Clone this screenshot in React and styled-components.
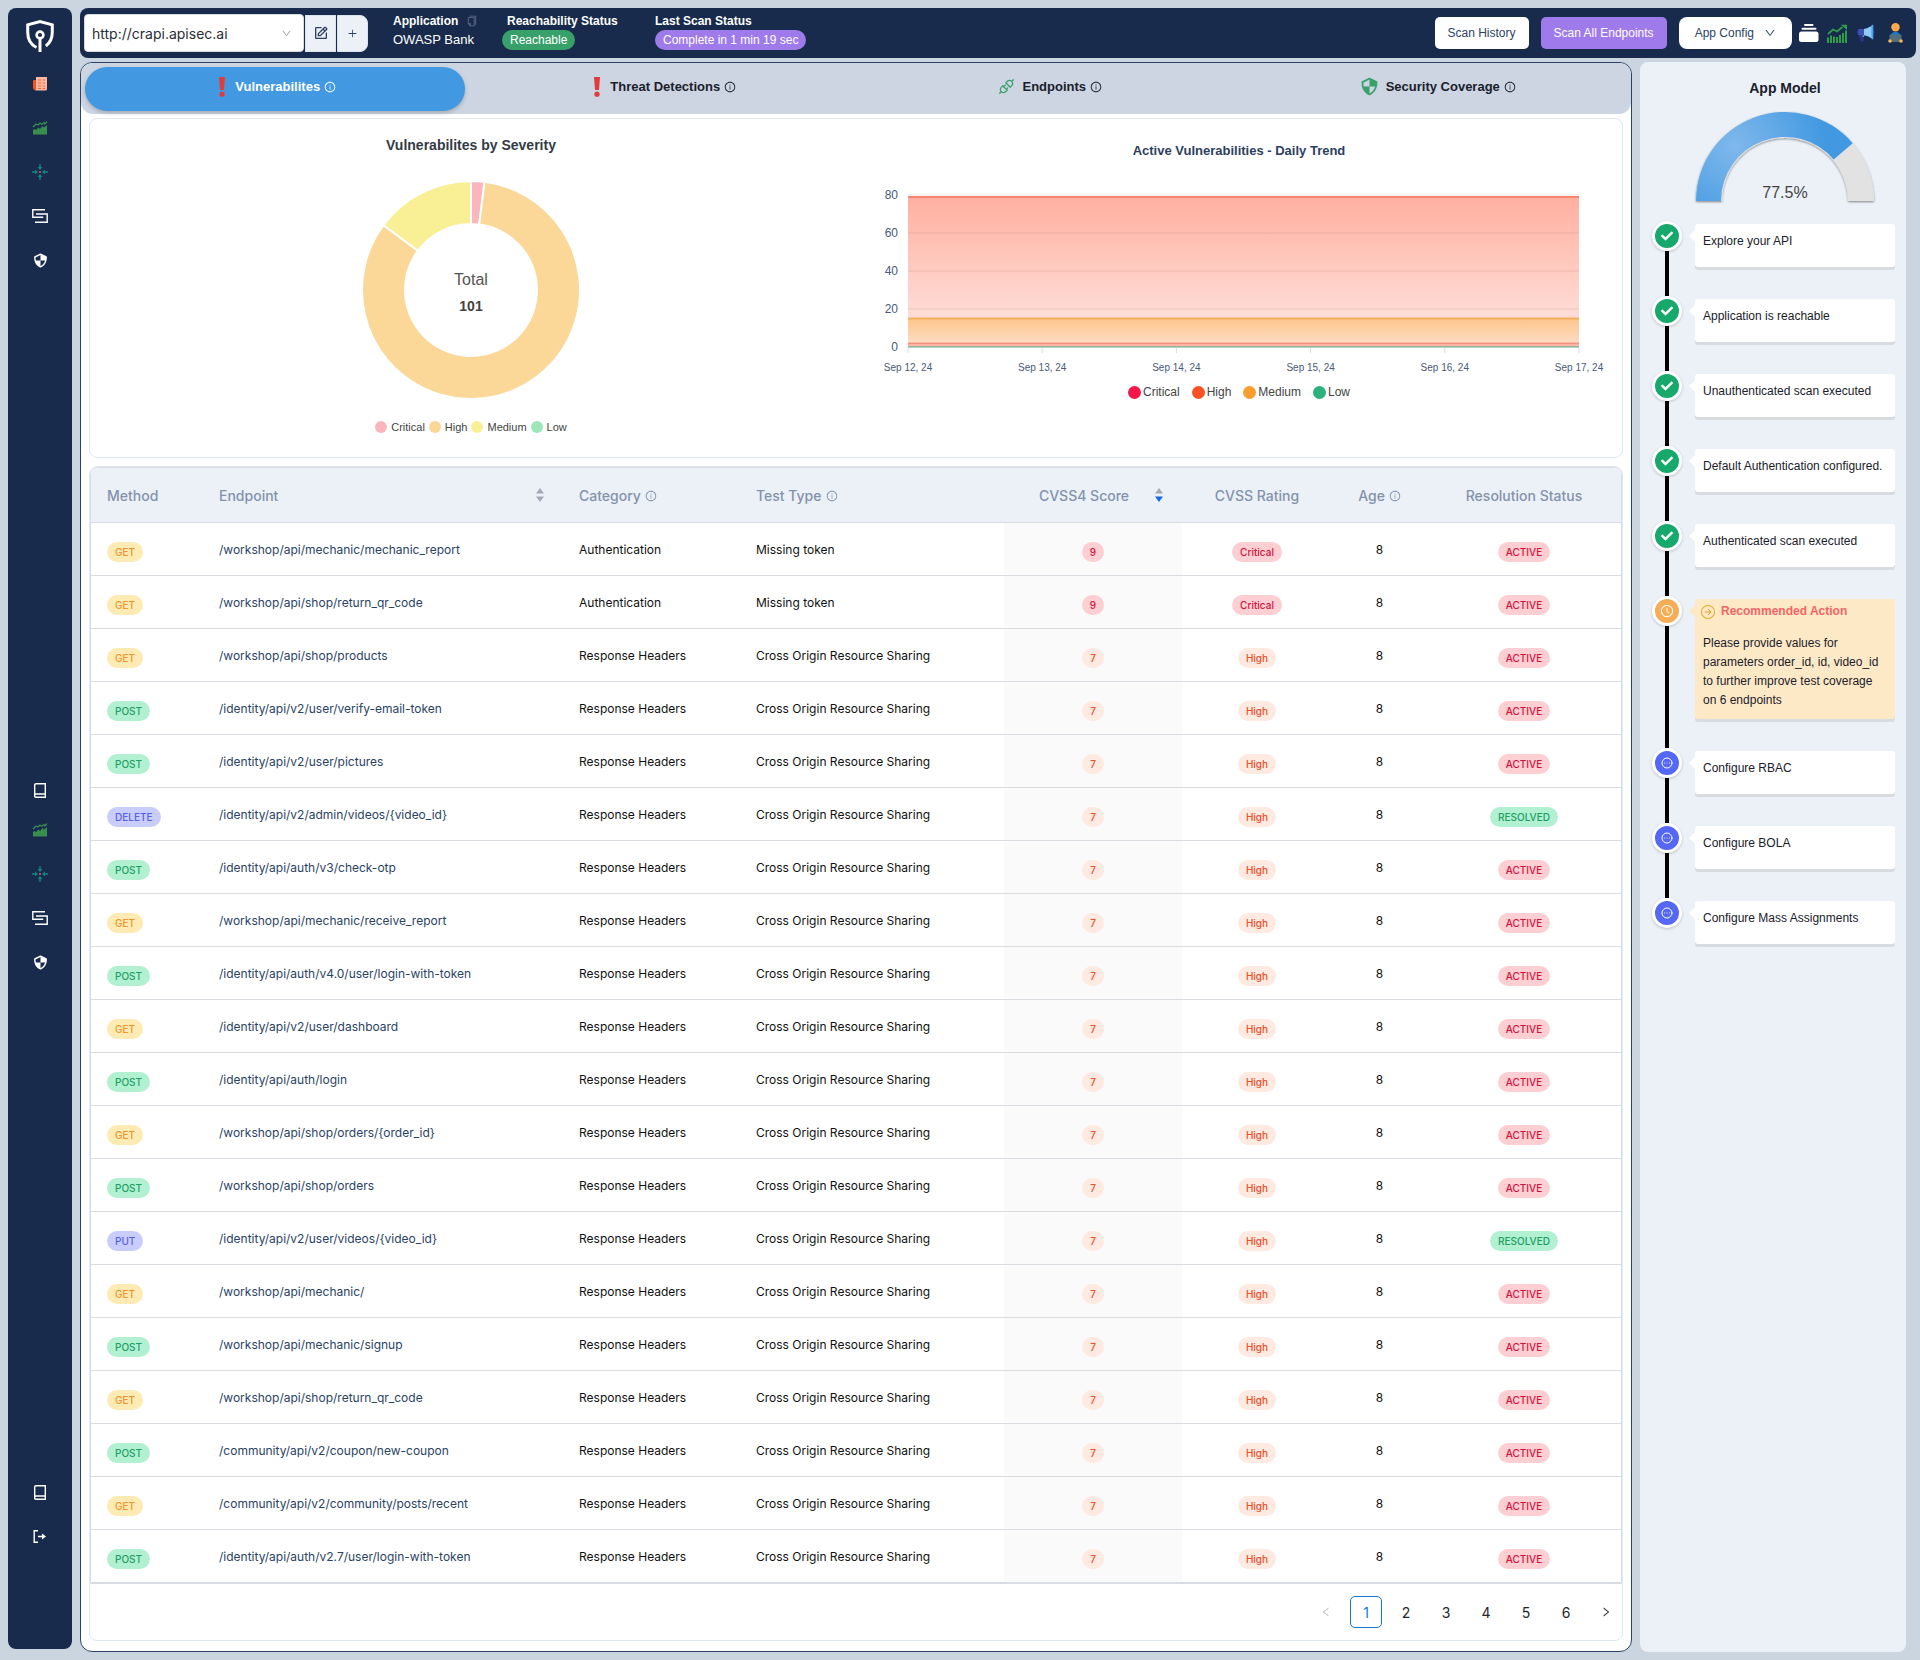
import { useState } from "react"
import styled, { createGlobalStyle } from "styled-components"
import {
  AiOutlineApi,
  AiOutlineClockCircle,
  AiOutlineCopy,
  AiOutlineDown,
  AiOutlineInfoCircle,
  AiOutlineLeft,
  AiOutlinePlus,
  AiOutlineRight,
} from "react-icons/ai"
import { BiEdit, BiShieldQuarter } from "react-icons/bi"
import { BsArrowRightCircle } from "react-icons/bs"
import { FaCheck } from "react-icons/fa"
import { FcAdvertising } from "react-icons/fc"
import { CircleEllipsis } from "lucide-react"

const GlobalStyle = createGlobalStyle`
  :root {
    --color-navy: #182b4d;
    --color-page: #cbd5e0;
    --color-panel: #ebf1f7;
    --color-border: #e2e8f0;
    --color-line: #d9dde1;
    --color-blue: #4299e1;
    --color-green: #38a169;
    --color-purple: #9f7aea;
    --font-ui: "Liberation Sans", Arial, sans-serif;
    --font-table: Inter, "Liberation Sans", sans-serif;
  }

  * {
    box-sizing: border-box;
  }

  body {
    margin: 0;
    background: var(--color-page);
    font-family: var(--font-ui);
    font-size: 12px;
    color: #1a202c;
  }

  button, select {
    font-family: inherit;
    cursor: pointer;
  }

  h2, p, dl, dd, ol, ul {
    margin: 0;
    padding: 0;
  }

  svg {
    display: block;
    flex-shrink: 0;
  }
`

const Page = styled.div`
  display: flex;
  gap: 8px;
  min-height: 100vh;
  padding: 8px 4px 8px 8px;
`

const Sidebar = styled.nav`
  display: flex;
  flex-direction: column;
  justify-content: space-between;
  flex: 0 0 64px;
  margin-bottom: 3px;
  padding: 10px 0 91px;
  border-radius: 8px;
  background: var(--color-navy);
`

const NavGroup = styled.div`
  display: flex;
  flex-direction: column;
  align-items: center;
  padding-top: ${({ $offset }) => $offset || 0}px;
`

const LogoLink = styled.a`
  display: flex;
  align-items: flex-start;
  height: 44px;
`

const NavLink = styled.a`
  display: flex;
  align-items: center;
  justify-content: center;
  width: 64px;
  height: ${({ $short }) => ($short ? 36 : 44)}px;
  color: white;
`

const Content = styled.div`
  display: flex;
  flex-direction: column;
  flex: 1;
  gap: 4px;
  min-width: 0;
`

const Header = styled.header`
  display: flex;
  align-items: center;
  height: 50px;
  padding: 0 11px 0 4px;
  border-radius: 8px;
  background: var(--color-navy);
  color: white;
`

const UrlGroup = styled.div`
  display: flex;
  align-items: center;
  gap: 1px;
`

const SelectBox = styled.label`
  display: flex;
  align-items: center;
  position: relative;

  svg {
    position: absolute;
    right: 12px;
    color: #a0a6b0;
    pointer-events: none;
  }
`

const UrlSelect = styled.select`
  appearance: none;
  width: 220px;
  height: 38px;
  padding: 0 30px 0 7px;
  border: 1px solid #d9d9d9;
  border-radius: 4px;
  background: white;
  color: #2a2e35;
  font-family: var(--font-table);
  font-size: 14px;
`

const SquareButton = styled.button`
  display: flex;
  align-items: center;
  justify-content: center;
  width: 31px;
  height: 37px;
  padding: 0;
  border: 1px solid #dbe3ee;
  border-radius: ${({ $last }) => ($last ? "0 8px 8px 0" : "0")};
  background: var(--color-panel);
  color: #2d3f62;
`

const StatusList = styled.dl`
  display: flex;
  align-self: flex-start;
  gap: 20px;
  flex: 1;
  padding-top: 5px;
  margin-left: 25px;
`

const Status = styled.div`
  display: flex;
  flex-direction: column;
  align-items: flex-start;
  gap: 1px;
  width: ${({ $width }) => $width}px;
`

const StatusLabel = styled.dt`
  display: flex;
  align-items: center;
  gap: 8px;
  line-height: 16px;
  font-weight: bold;
  white-space: nowrap;
  padding-left: ${({ $inset }) => ($inset ? 5 : 0)}px;

  svg {
    color: #5f6f8c;
  }
`

const StatusValue = styled.dd`
  line-height: 20px;
  font-size: 13px;
`

const StatusPill = styled.dd`
  padding: 0 8px;
  border-radius: 10px;
  background: ${({ $color }) => $color};
  line-height: 20px;
  white-space: nowrap;
`

const HeaderActions = styled.div`
  display: flex;
  align-items: center;
  gap: 12px;
`

const HeaderButton = styled.button`
  display: flex;
  align-items: center;
  gap: 10px;
  height: 32px;
  padding: 0 ${({ $wide }) => ($wide ? 16 : 13)}px;
  border: none;
  border-radius: ${({ $wide }) => ($wide ? 8 : 5)}px;
  background: ${({ $primary }) => ($primary ? "var(--color-purple)" : "white")};
  color: ${({ $primary }) => ($primary ? "white" : "#2a4365")};
  font-size: 12px;
  white-space: nowrap;
`

const HeaderIcons = styled.div`
  display: flex;
  align-items: center;
  gap: 8px;
  margin-left: -5px;
`

const IconButton = styled.button`
  display: flex;
  padding: 0;
  border: none;
  background: none;
  color: white;
`

const Body = styled.div`
  display: flex;
  flex: 1;
  gap: 8px;
  margin-right: 10px;
`

const Main = styled.main`
  flex: 1;
  min-width: 0;
  border: 1px solid #2a4365;
  border-radius: 12px;
  background: white;
`

const TabBar = styled.div`
  display: grid;
  grid-template-columns: repeat(4, 1fr);
  height: 51px;
  padding: 4px 0 3px;
  border-radius: 12px;
  background: #ccd5e1;
`

const Tab = styled.button`
  display: flex;
  align-items: center;
  justify-content: center;
  gap: 4px;
  margin: 0 4px;
  padding: 0 0 5px;
  border: none;
  border-radius: 22px;
  background: ${({ $active }) => ($active ? "var(--color-blue)" : "transparent")};
  box-shadow: ${({ $active }) => ($active ? "0 2px 4px rgba(0, 0, 0, 0.2)" : "none")};
  color: ${({ $active }) => ($active ? "white" : "#1a202c")};
  font-size: 13px;
  font-weight: bold;
`

const TabLabel = styled.span`
  padding-left: 2px;
`

const Panels = styled.div`
  display: flex;
  flex-direction: column;
  gap: 8px;
  padding: 4px 8px 10px;
`

const Card = styled.section`
  border: 1px solid var(--color-border);
  border-radius: 8px;
`

const ChartsCard = styled(Card)`
  display: grid;
  grid-template-columns: 1fr 1fr;
  height: 340px;
`

const ChartColumn = styled.div`
  display: flex;
  flex-direction: column;
  align-items: center;
  padding-top: ${({ $top }) => $top}px;
  padding-right: ${({ $right }) => $right || 0}px;
`

const ChartTitle = styled.h2`
  font-size: ${({ $small }) => ($small ? 13 : 14)}px;
  line-height: 20px;
  color: ${({ $small }) => ($small ? "#2d3f62" : "#333a44")};
`

const Donut = styled.svg`
  width: 220px;
  height: 220px;
  margin: 25px 0 19px;
`

const TrendSvg = styled.svg`
  width: 100%;
  margin-top: 22px;
`

const Legend = styled.ul`
  display: flex;
  gap: ${({ $large }) => ($large ? 12 : 4)}px;
  list-style: none;
  font-size: ${({ $large }) => ($large ? 12 : 11)}px;
  line-height: 16px;
  color: #444;
`

const LegendItem = styled.li`
  display: flex;
  align-items: center;
  gap: ${({ $large }) => ($large ? 2 : 4)}px;

  &::before {
    content: "";
    width: ${({ $large }) => ($large ? 13 : 12)}px;
    height: ${({ $large }) => ($large ? 13 : 12)}px;
    border-radius: 50%;
    background: ${({ $color }) => $color};
  }
`

const TableFrame = styled.div`
  border: 1px solid var(--color-line);
  border-radius: 8px 8px 0 0;
  overflow: hidden;
`

const Table = styled.table`
  width: 100%;
  table-layout: fixed;
  border-collapse: separate;
  border-spacing: 0;
  font-family: var(--font-table);
  font-size: 12px;
`

const HeadCell = styled.th`
  height: 55px;
  padding: 0 16px;
  border-bottom: 1px solid var(--color-line);
  background: #ebf1f6;
  color: #8492ad;
  font-size: 14px;
  font-weight: 500;
  white-space: nowrap;
`

const HeadContent = styled.div`
  display: flex;
  align-items: center;
  justify-content: ${({ $center }) => ($center ? "center" : "flex-start")};
  gap: 4px;
`

const HeadLabel = styled.span`
  flex: ${({ $grow }) => ($grow ? 1 : "none")};
  text-align: ${({ $center }) => ($center ? "center" : "left")};
`

const InfoIcon = styled(AiOutlineInfoCircle)`
  margin-top: 2px;
`

const SortButton = styled.button`
  padding: 0 3px;
  border: none;
  background: none;
`

const Cell = styled.td`
  height: 53px;
  padding: ${({ $tag }) => ($tag ? "5px 16px 0" : "0 16px")};
  border-bottom: 1px solid var(--color-line);
  background: ${({ $sorted }) => ($sorted ? "#fafafa" : "white")};
  color: #101010;
  text-align: ${({ $center }) => ($center ? "center" : "left")};
`

const EndpointLink = styled.a`
  color: #2a4365;
  text-decoration: none;
`

const tones = {
  GET: ["#feebb4", "#f0932b"],
  POST: ["#b2f0d2", "#1d9e63"],
  PUT: ["#c9cdfd", "#5561ea"],
  DELETE: ["#c9cdfd", "#5561ea"],
  Critical: ["#fdcfd2", "#d3113f"],
  High: ["#feeae1", "#e8502b"],
  ACTIVE: ["#fdcfd2", "#d3113f"],
  RESOLVED: ["#b2f0d2", "#1d9e63"],
}

const Tag = styled.span`
  display: inline-block;
  padding: 0 8px;
  border-radius: 10px;
  background: ${({ $tone }) => tones[$tone][0]};
  color: ${({ $tone }) => tones[$tone][1]};
  font-size: 10px;
  font-weight: 500;
  line-height: 20px;
  vertical-align: middle;
`

const Pagination = styled.nav`
  display: flex;
  justify-content: flex-end;
  gap: 8px;
  padding: 12px 0;
`

const PageButton = styled.button`
  display: flex;
  align-items: center;
  justify-content: center;
  width: 32px;
  height: 32px;
  padding: 0;
  border: 1px solid ${({ $active }) => ($active ? "#1677cf" : "transparent")};
  border-radius: 5px;
  background: white;
  color: ${({ $active }) => ($active ? "#1677e6" : "#22262c")};
  font-family: var(--font-table);
  font-size: 14px;

  &:disabled {
    color: #bfbfbf;
    cursor: default;
  }
`

const Aside = styled.aside`
  flex: 0 0 266px;
  padding: 16px 11px 16px 12px;
  border-radius: 8px;
  background: var(--color-panel);
`

const Gauge = styled.div`
  display: flex;
  flex-direction: column;
  align-items: center;
  gap: 12px;
  margin: 0 -11px 0 12px;
`

const AsideTitle = styled.h2`
  font-size: 14px;
  line-height: 20px;
`

const Timeline = styled.ol`
  margin-top: 15px;
  list-style: none;
`

const Step = styled.li`
  display: flex;
  gap: 13px;
`

const Rail = styled.div`
  display: flex;
  flex-direction: column;
  align-items: center;
  flex: 0 0 30px;
`

const StepDot = styled.span`
  display: flex;
  align-items: center;
  justify-content: center;
  width: 30px;
  height: 30px;
  border: 3px solid white;
  border-radius: 50%;
  background: ${({ $color }) => $color};
  box-shadow: 0 1px 3px rgba(0, 0, 0, 0.2);
  color: white;
`

const RailLine = styled.span`
  flex: 1;
  width: 4px;
  background: black;
`

const StepCard = styled.div`
  position: relative;
  flex: 1;
  min-height: 43px;
  margin: 3px 0 29px;
  padding: 8px 8px ${({ $highlight }) => ($highlight ? 9 : 7)}px;
  border-radius: 3px;
  background: ${({ $highlight }) => ($highlight ? "#fee9c6" : "white")};
  box-shadow: 0 3px 0 #d8dce1;
  line-height: 19px;

  &::before {
    content: "";
    position: absolute;
    top: 6px;
    left: -6px;
    border: 6px solid transparent;
    border-left-width: 0;
    border-right-color: ${({ $highlight }) => ($highlight ? "#fee9c6" : "white")};
  }
`

const StepTitle = styled.p`
  display: flex;
  align-items: center;
  gap: 6px;
  margin: -5px 0 13px -2px;
  color: #f56565;
  font-weight: bold;

  svg {
    color: #e0a526;
  }
`

const LogoIcon = () => (
  <svg width="28" height="34" viewBox="0 0 28 34" fill="none" stroke="white">
    <path d="M10.5 29.5C4.500 26.500 1.700 21 1.700 14V6.800L14 3.500l12.300 3.300V14c0 6-2.300 11-6.500 14" strokeWidth="3" />
    <circle cx="14" cy="17" r="3.400" strokeWidth="2.600" />
    <path d="M14 20.500V34" strokeWidth="3" />
  </svg>
)

const NewsIcon = () => (
  <svg width="14" height="14" viewBox="0 0 14 14">
    <path d="M1 3h2v10H2a2 2 0 0 1-2-2V4a1 1 0 0 1 1-1z" fill="#f4511e" />
    <path d="M3 0h11v12a1.500 1.500 0 0 1-1.500 1.500H2.500L3 12z" fill="#ffb8a0" />
    <path d="M5 3h3M5 6h3M5 9h3M5 11.500h3M10 3h2M10 6h2M10 9h2M10 11.500h2" stroke="#f4623a" />
  </svg>
)

const AreaIcon = () => (
  <svg width="16" height="14" viewBox="0 0 16 14">
    <path d="M1 9l1.500-1 1.500 1 2.500-2.500L8 8l2.500-3 1.500 1.500L15 4v9.500H1z" fill="#388e4c" />
    <path d="M1 6l3-3 2 1 2-2 2 1.500L12 1.500 13 3l2-2.500" fill="none" stroke="#388e4c" strokeWidth="1.300" />
  </svg>
)

const CollectIcon = () => (
  <svg width="16" height="16" viewBox="0 0 16 16" fill="#16847f">
    <path d="M7.300 0h1.400v3H10.500L8 6 5.500 3h1.800zM7.300 16h1.400v-3H10.500L8 10l-2.500 3h1.800zM0 7.300v1.400h3V10.500l3-2.500-3-2.500v1.800zM16 7.300v1.400h-3V10.500l-3-2.500 3-2.500v1.800z" />
    <circle cx="8" cy="8" r="1.100" fill="#e0507a" />
  </svg>
)

const PathIcon = () => (
  <svg width="16" height="14" viewBox="0 0 16 14" fill="none" stroke="white" strokeWidth="1.400">
    <path d="M13 .8H.8v7.400h10.400M3 13.200h12.200V5H4" />
  </svg>
)

const BookIcon = () => (
  <svg width="12" height="15" viewBox="0 0 12 15" fill="none" stroke="white" strokeWidth="1.400">
    <path d="M.7 12.800V2A1.300 1.300 0 0 1 2 .7h9.300v13.600H2.200a1.500 1.500 0 0 1 0-3.300h9.100" />
  </svg>
)

const LogoutIcon = () => (
  <svg width="14" height="13" viewBox="0 0 14 13" fill="none" stroke="white" strokeWidth="1.400">
    <path d="M5 .8H1.200v11.400H5M5 6.500h5" />
    <path d="M9 3.500l4 3-4 3z" fill="white" stroke="none" />
  </svg>
)

const StackIcon = () => (
  <svg width="20" height="18" viewBox="0 0 20 18" fill="white">
    <rect x="0" y="7.500" width="19.500" height="10.500" rx="2.500" />
    <rect x="2.500" y="3.800" width="15" height="2" rx="1" />
    <rect x="5" y="0" width="9.500" height="2" rx="1" />
  </svg>
)

const TrendIcon = () => (
  <svg width="20" height="19" viewBox="0 0 20 19" fill="#2f9e48">
    <path d="M0 13.500h2V19H0zM3 11.500h2V19H3zM6 12.500h2V19H6zM9 13h2v6H9zM12 11h2v8h-2zM15 9h2v10h-2zM18 6.500h2V19h-2z" />
    <path d="M1 10l5-4.500 4 2L15.500 3" fill="none" stroke="#2f9e48" strokeWidth="1.800" />
    <path d="M14 .8h6V6z" />
  </svg>
)

const UserIcon = () => (
  <svg width="20" height="20" viewBox="-3 0 20 20">
    <path d="M2.500 14c0-3.500 2-5 5-5s5 1.500 5 5z" fill="#1976d2" />
    <circle cx="7.500" cy="4.200" r="4.200" fill="#ffa94d" />
    <rect x="1.500" y="11.500" width="12" height="7.500" rx="1" fill="#546e7a" />
    <circle cx="2" cy="18" r="1.800" fill="#ffb74d" />
    <circle cx="13" cy="18" r="1.800" fill="#ffb74d" />
  </svg>
)

const AlertIcon = () => (
  <svg width="16" height="20" viewBox="-5 0 16 20" fill="#e03c3c">
    <path d="M1 0h6l-1 13H2z" />
    <circle cx="4" cy="17.200" r="2.600" />
  </svg>
)

const Sorter = ({ down }) => (
  <svg width="8" height="14" viewBox="0 0 8 14">
    <path d="M4 0l4 5.500H0z" fill="#a3aab5" />
    <path d="M4 14l4-5.500H0z" fill={down ? "#1668e3" : "#a3aab5"} />
  </svg>
)

const mainNav = [
  { label: "Reports", icon: <NewsIcon /> },
  { label: "Trends", icon: <AreaIcon /> },
  { label: "Endpoints", icon: <CollectIcon /> },
  { label: "Workflows", icon: <PathIcon /> },
  { label: "Security", icon: <BiShieldQuarter size={17} /> },
]

const tabs = [
  { label: "Vulnerabilites", icon: <AlertIcon /> },
  { label: "Threat Detections", icon: <AlertIcon /> },
  { label: "Endpoints", icon: <AiOutlineApi size={19} color="#38a169" /> },
  { label: "Security Coverage", icon: <BiShieldQuarter size={21} color="#38a169" /> },
]

const severities = [
  { label: "Critical", count: 2, soft: "#fbb6bd", strong: "#f5174b" },
  { label: "High", count: 84, soft: "#fbd798", strong: "#fb5125" },
  { label: "Medium", count: 15, soft: "#f9f096", strong: "#fb9e32" },
  { label: "Low", count: 0, soft: "#9ce6b8", strong: "#2bb17c" },
]

const columns = [
  { label: "Method", width: 112 },
  { label: "Endpoint", width: 360, sort: true },
  { label: "Category", width: 177, info: true },
  { label: "Test Type", width: 264, info: true },
  { label: "CVSS4 Score", width: 178, sort: true, down: true, center: true },
  { label: "CVSS Rating", width: 150, center: true },
  { label: "Age", width: 95, info: true, center: true },
  { label: "Resolution Status", width: 194, center: true },
]

const findings = [
  ["GET", "/workshop/api/mechanic/mechanic_report"],
  ["GET", "/workshop/api/shop/return_qr_code"],
  ["GET", "/workshop/api/shop/products"],
  ["POST", "/identity/api/v2/user/verify-email-token"],
  ["POST", "/identity/api/v2/user/pictures"],
  ["DELETE", "/identity/api/v2/admin/videos/{video_id}"],
  ["POST", "/identity/api/auth/v3/check-otp"],
  ["GET", "/workshop/api/mechanic/receive_report"],
  ["POST", "/identity/api/auth/v4.0/user/login-with-token"],
  ["GET", "/identity/api/v2/user/dashboard"],
  ["POST", "/identity/api/auth/login"],
  ["GET", "/workshop/api/shop/orders/{order_id}"],
  ["POST", "/workshop/api/shop/orders"],
  ["PUT", "/identity/api/v2/user/videos/{video_id}"],
  ["GET", "/workshop/api/mechanic/"],
  ["POST", "/workshop/api/mechanic/signup"],
  ["GET", "/workshop/api/shop/return_qr_code"],
  ["POST", "/community/api/v2/coupon/new-coupon"],
  ["GET", "/community/api/v2/community/posts/recent"],
  ["POST", "/identity/api/auth/v2.7/user/login-with-token"],
].map(([method, endpoint], index) => ({
  method,
  endpoint,
  category: index < 2 ? "Authentication" : "Response Headers",
  test: index < 2 ? "Missing token" : "Cross Origin Resource Sharing",
  score: index < 2 ? 9 : 7,
  rating: index < 2 ? "Critical" : "High",
  age: 8,
  status: method === "DELETE" || method === "PUT" ? "RESOLVED" : "ACTIVE",
}))

const stepStyles = {
  done: { color: "#17a96b", icon: <FaCheck size={12} /> },
  current: { color: "#f6ad55", icon: <AiOutlineClockCircle size={14} /> },
  todo: { color: "#5468f5", icon: <CircleEllipsis size={12} /> },
}

const steps = [
  { text: "Explore your API", state: "done" },
  { text: "Application is reachable", state: "done" },
  { text: "Unauthenticated scan executed", state: "done" },
  { text: "Default Authentication configured.", state: "done" },
  { text: "Authenticated scan executed", state: "done" },
  {
    title: "Recommended Action",
    text: "Please provide values for parameters order_id, id, video_id to further improve test coverage on 6 endpoints",
    state: "current",
  },
  { text: "Configure RBAC", state: "todo" },
  { text: "Configure BOLA", state: "todo" },
  { text: "Configure Mass Assignments", state: "todo" },
]

// point on a circle, angle in turns clockwise from the top
const polar = (cx, cy, r, turn) => {
  const angle = turn * 2 * Math.PI
  return `${cx + r * Math.sin(angle)} ${cy - r * Math.cos(angle)}`
}

const ringSlice = (cx, cy, outer, inner, from, to) => {
  const large = to - from > 0.5 ? 1 : 0
  return `M${polar(cx, cy, outer, from)} A${outer} ${outer} 0 ${large} 1 ${polar(cx, cy, outer, to)}
    L${polar(cx, cy, inner, to)} A${inner} ${inner} 0 ${large} 0 ${polar(cx, cy, inner, from)}Z`
}

const SeverityChart = () => {
  const total = severities.reduce((sum, item) => sum + item.count, 0)
  let start = 0

  return (
    <ChartColumn $top={16} $right={4}>
      <ChartTitle>Vulnerabilites by Severity</ChartTitle>
      <Donut viewBox="0 0 220 220">
        {severities.filter((item) => item.count > 0).map((item) => {
          const from = start
          start += item.count / total
          return (
            <path
              key={item.label}
              d={ringSlice(110, 110, 109, 66, from, start)}
              fill={item.soft}
              stroke="white"
              strokeWidth="2"
            />
          )
        })}
        <text x="110" y="105" textAnchor="middle" fontSize="16" fill="#555">Total</text>
        <text x="110" y="131" textAnchor="middle" fontSize="14" fontWeight="bold" fill="#444">{total}</text>
      </Donut>
      <Legend>
        {severities.map((item) => (
          <LegendItem key={item.label} $color={item.soft}>{item.label}</LegendItem>
        ))}
      </Legend>
    </ChartColumn>
  )
}

const TrendChart = () => {
  const left = 52
  const right = 723
  const y = (value) => 164 - value * 1.9

  return (
    <ChartColumn $top={22}>
      <ChartTitle $small>Active Vulnerabilities - Daily Trend</ChartTitle>
      <TrendSvg viewBox="0 0 766 201">
        <defs>
          <linearGradient id="high" x1="0" y1="0" x2="0" y2="1">
            <stop offset="0" stopColor="#ffb0a0" />
            <stop offset="1" stopColor="#fee8e4" />
          </linearGradient>
          <linearGradient id="medium" x1="0" y1="0" x2="0" y2="1">
            <stop offset="0" stopColor="#fdc58a" />
            <stop offset="1" stopColor="#fde0cc" />
          </linearGradient>
        </defs>
        <rect x={left} y={y(79)} width={right - left} height={y(0) - y(79)} fill="url(#high)" />
        <rect x={left} y={y(15)} width={right - left} height={y(0) - y(15)} fill="url(#medium)" />
        <rect x={left} y={y(2)} width={right - left} height={y(0) - y(2)} fill="#fbb5a4" />
        {[20, 40, 60, 80].map((value) => (
          <path key={value} d={`M${left} ${y(value)}H${right}`} stroke="#8c5a5a" strokeOpacity="0.15" />
        ))}
        <path d={`M${left} ${y(79)}H${right}`} stroke="#fb8570" strokeWidth="2" />
        <path d={`M${left} ${y(15)}H${right}`} stroke="#f3ad5c" strokeWidth="2" />
        <path d={`M${left} ${y(2)}H${right}`} stroke="#f07c6c" strokeWidth="1" />
        <path d={`M${left} ${y(0)}H${right}`} stroke="#4fae84" strokeWidth="1" />
        {[0, 20, 40, 60, 80].map((value) => (
          <text key={value} x="42" y={y(value) + 4} textAnchor="end" fontSize="12" fill="#4a5a78">{value}</text>
        ))}
        {[12, 13, 14, 15, 16, 17].map((day, index) => {
          const x = left + ((right - left) / 5) * index
          return (
            <g key={day}>
              <path d={`M${x} 165v5`} stroke="#d8dce4" />
              <text x={x} y="188" textAnchor="middle" fontSize="10" fill="#4a5a78">{`Sep ${day}, 24`}</text>
            </g>
          )
        })}
      </TrendSvg>
      <Legend $large>
        {severities.map((item) => (
          <LegendItem key={item.label} $large $color={item.strong}>{item.label}</LegendItem>
        ))}
      </Legend>
    </ChartColumn>
  )
}

const ModelGauge = ({ value }) => {
  const end = -0.25 + value / 200

  return (
    <Gauge>
      <AsideTitle>App Model</AsideTitle>
      <svg width="184" height="96" viewBox="0 0 184 96">
        <defs>
          <radialGradient id="gauge" gradientUnits="userSpaceOnUse" cx="42" cy="36" r="90">
            <stop offset="0" stopColor="#7fb8ec" />
            <stop offset="1" stopColor="#4299e1" />
          </radialGradient>
          <filter id="gaugeShadow" x="-10%" y="-10%" width="120%" height="130%">
            <feDropShadow dx="0" dy="1" stdDeviation="1" floodOpacity="0.45" />
          </filter>
        </defs>
        <g filter="url(#gaugeShadow)">
          <path d={ringSlice(92, 91, 89, 63, -0.25, 0.25)} fill="#e2e2e2" />
          <path d={ringSlice(92, 91, 89, 64, -0.25, end)} fill="url(#gauge)" />
        </g>
        <text x="92" y="88" textAnchor="middle" fontSize="16" fill="#444">{value}%</text>
      </svg>
    </Gauge>
  )
}

const FindingRow = ({ finding }) => (
  <tr>
    <Cell $tag><Tag $tone={finding.method}>{finding.method}</Tag></Cell>
    <Cell><EndpointLink href="#finding">{finding.endpoint}</EndpointLink></Cell>
    <Cell>{finding.category}</Cell>
    <Cell>{finding.test}</Cell>
    <Cell $tag $center $sorted><Tag $tone={finding.rating}>{finding.score}</Tag></Cell>
    <Cell $tag $center><Tag $tone={finding.rating}>{finding.rating}</Tag></Cell>
    <Cell $center>{finding.age}</Cell>
    <Cell $tag $center><Tag $tone={finding.status}>{finding.status}</Tag></Cell>
  </tr>
)

const App = () => {
  const [activeTab, setActiveTab] = useState("Vulnerabilites")
  const [page, setPage] = useState(1)

  return (
    <>
      <GlobalStyle />
      <Page>
        <Sidebar aria-label="Main">
          <NavGroup>
            <LogoLink href="#home" aria-label="Home"><LogoIcon /></LogoLink>
            {mainNav.map((item) => (
              <NavLink key={item.label} href="#nav" aria-label={item.label}>{item.icon}</NavLink>
            ))}
          </NavGroup>
          <NavGroup $offset={4}>
            <NavLink $short href="#docs" aria-label="Docs"><BookIcon /></NavLink>
            {mainNav.slice(1).map((item) => (
              <NavLink key={item.label} href="#nav" aria-label={item.label}>{item.icon}</NavLink>
            ))}
          </NavGroup>
          <NavGroup>
            <NavLink href="#docs" aria-label="Docs"><BookIcon /></NavLink>
            <NavLink href="#logout" aria-label="Log out"><LogoutIcon /></NavLink>
          </NavGroup>
        </Sidebar>

        <Content>
          <Header>
            <UrlGroup>
              <SelectBox>
                <UrlSelect aria-label="Application URL">
                  <option>http://crapi.apisec.ai</option>
                </UrlSelect>
                <AiOutlineDown size={11} />
              </SelectBox>
              <SquareButton aria-label="Edit"><BiEdit size={16} /></SquareButton>
              <SquareButton $last aria-label="Add"><AiOutlinePlus size={11} /></SquareButton>
            </UrlGroup>
            <StatusList>
              <Status $width={89}>
                <StatusLabel>Application <AiOutlineCopy size={12} /></StatusLabel>
                <StatusValue>OWASP Bank</StatusValue>
              </Status>
              <Status $width={133}>
                <StatusLabel $inset>Reachability Status</StatusLabel>
                <StatusPill $color="var(--color-green)">Reachable</StatusPill>
              </Status>
              <Status $width={160}>
                <StatusLabel>Last Scan Status</StatusLabel>
                <StatusPill $color="var(--color-purple)">Complete in 1 min 19 sec</StatusPill>
              </Status>
            </StatusList>
            <HeaderActions>
              <HeaderButton>Scan History</HeaderButton>
              <HeaderButton $primary>Scan All Endpoints</HeaderButton>
              <HeaderButton $wide>App Config <AiOutlineDown size={12} /></HeaderButton>
              <HeaderIcons>
                <IconButton aria-label="Collections"><StackIcon /></IconButton>
                <IconButton aria-label="Statistics"><TrendIcon /></IconButton>
                <IconButton aria-label="Announcements"><FcAdvertising size={22} /></IconButton>
                <IconButton aria-label="Account"><UserIcon /></IconButton>
              </HeaderIcons>
            </HeaderActions>
          </Header>

          <Body>
            <Main>
              <TabBar role="tablist">
                {tabs.map((tab) => (
                  <Tab
                    key={tab.label}
                    role="tab"
                    aria-selected={tab.label === activeTab}
                    $active={tab.label === activeTab}
                    onClick={() => setActiveTab(tab.label)}
                  >
                    {tab.icon}
                    <TabLabel>{tab.label}</TabLabel>
                    <AiOutlineInfoCircle size={12} />
                  </Tab>
                ))}
              </TabBar>

              <Panels>
                <ChartsCard>
                  <SeverityChart />
                  <TrendChart />
                </ChartsCard>

                <Card>
                  <TableFrame>
                    <Table>
                      <colgroup>
                        {columns.map((column) => (
                          <col key={column.label} width={column.width} />
                        ))}
                      </colgroup>
                      <thead>
                        <tr>
                          {columns.map((column) => (
                            <HeadCell key={column.label} scope="col">
                              <HeadContent $center={column.center}>
                                <HeadLabel $grow={column.sort} $center={column.center}>{column.label}</HeadLabel>
                                {column.info && <InfoIcon size={12} />}
                                {column.sort && (
                                  <SortButton aria-label={`Sort by ${column.label}`}>
                                    <Sorter down={column.down} />
                                  </SortButton>
                                )}
                              </HeadContent>
                            </HeadCell>
                          ))}
                        </tr>
                      </thead>
                      <tbody>
                        {findings.map((finding, index) => (
                          <FindingRow key={index} finding={finding} />
                        ))}
                      </tbody>
                    </Table>
                  </TableFrame>
                  <Pagination aria-label="Pages">
                    <PageButton disabled={page === 1} aria-label="Previous" onClick={() => setPage(page - 1)}>
                      <AiOutlineLeft size={12} />
                    </PageButton>
                    {[1, 2, 3, 4, 5, 6].map((number) => (
                      <PageButton key={number} $active={number === page} onClick={() => setPage(number)}>
                        {number}
                      </PageButton>
                    ))}
                    <PageButton disabled={page === 6} aria-label="Next" onClick={() => setPage(page + 1)}>
                      <AiOutlineRight size={12} />
                    </PageButton>
                  </Pagination>
                </Card>
              </Panels>
            </Main>

            <Aside>
              <ModelGauge value={77.5} />
              <Timeline>
                {steps.map((step, index) => (
                  <Step key={step.text}>
                    <Rail>
                      <StepDot $color={stepStyles[step.state].color}>{stepStyles[step.state].icon}</StepDot>
                      {index < steps.length - 1 && <RailLine />}
                    </Rail>
                    <StepCard $highlight={step.state === "current"}>
                      {step.title && (
                        <StepTitle><BsArrowRightCircle size={14} /> {step.title}</StepTitle>
                      )}
                      <p>{step.text}</p>
                    </StepCard>
                  </Step>
                ))}
              </Timeline>
            </Aside>
          </Body>
        </Content>
      </Page>
    </>
  )
}

export default App
